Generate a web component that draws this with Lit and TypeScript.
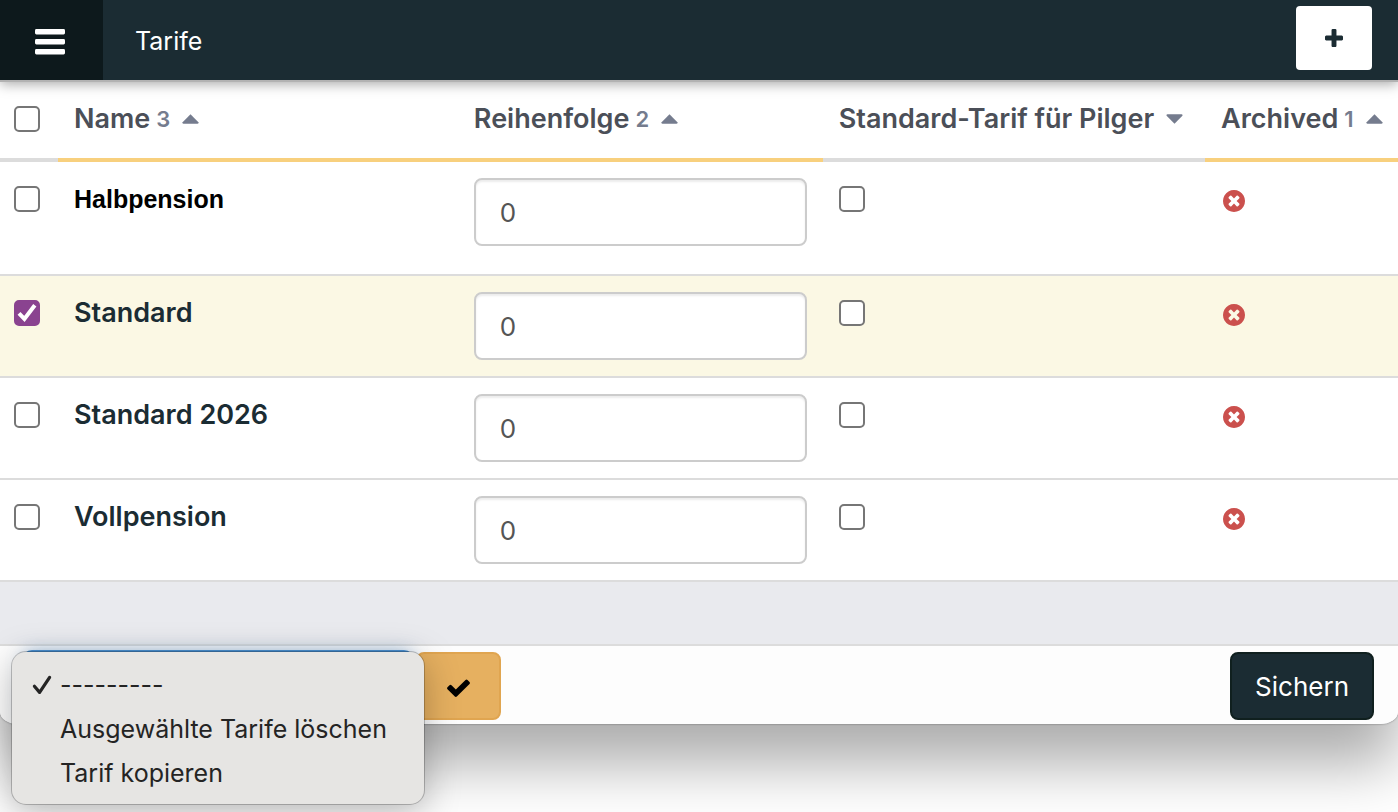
import { LitElement, html, css, svg } from "lit";
import { customElement, property, state } from "lit/decorators.js";

interface Tariff {
  name: string;
  order: number;
  selected: boolean;
  current: boolean;
}

interface Column {
  label: string;
  priority?: number;
  cls: string;
}

const PLUS = svg`<path d="M1600 736v192q0 40-28 68t-68 28h-416v416q0 40-28 68t-68 28h-192q-40 0-68-28t-28-68v-416h-416q-40 0-68-28t-28-68v-192q0-40 28-68t68-28h416v-416q0-40 28-68t68-28h192q40 0 68 28t28 68v416h416q40 0 68 28t28 68z"/>`;
const CHECK = svg`<path d="M1671 566q0 40-28 68l-724 724-136 136q-28 28-68 28t-68-28l-136-136-362-362q-28-28-28-68t28-68l136-136q28-28 68-28t68 28l294 295 656-657q28-28 68-28t68 28l136 136q28 28 28 68z"/>`;
const TIMES_CIRCLE = svg`<path d="M1277 1122q0-26-19-45l-181-181 181-181q19-19 19-45 0-27-19-46l-90-90q-19-19-46-19-26 0-45 19l-181 181-181-181q-19-19-45-19-27 0-46 19l-90 90q-19 19-19 46 0 26 19 45l181 181-181 181q-19 19-19 45 0 27 19 46l90 90q19 19 46 19 26 0 45-19l181-181 181 181q19 19 45 19 27 0 46-19l90-90q19-19 19-46zm387-226q0 209-103 385.5t-279.5 279.5-385.5 103-385.5-103-279.5-279.5-103-385.5 103-385.5 279.5-279.5 385.5-103 385.5 103 279.5 279.5 103 385.5z"/>`;

const ACTIONS = ["---------", "Ausgewählte Tarife löschen", "Tarif kopieren"];

@customElement("tick-box")
export class TickBox extends LitElement {
  @property() label = "";
  @property({ type: Boolean }) checked = false;

  static styles = css`
    :host {
      display: block;
    }
    .box {
      display: grid;
      width: 26px;
      height: 26px;
    }
    input,
    svg {
      grid-area: 1 / 1;
      width: 26px;
      height: 26px;
    }
    input {
      appearance: none;
      box-sizing: border-box;
      margin: 0;
      border: 2px solid #767676;
      border-radius: 5px;
      background: #fff;
    }
    input:checked {
      border-color: #8a4390;
      background: #8a4390;
    }
    svg {
      display: none;
      pointer-events: none;
    }
    input:checked + svg {
      display: block;
    }
  `;

  render() {
    return html`<label class="box">
      <input
        type="checkbox"
        aria-label=${this.label}
        .checked=${this.checked}
        @change=${(e: Event) => {
          this.checked = (e.target as HTMLInputElement).checked;
        }}
      />
      <svg viewBox="0 0 26 26" aria-hidden="true">
        <path d="M5 13.4l5.4 5.6L20.8 5.2" fill="none" stroke="#fff" stroke-width="4" />
      </svg>
    </label>`;
  }
}

@customElement("app-root")
export class AppRoot extends LitElement {
  @state() private action = 0;
  @state() private rows: Tariff[] = [
    { name: "Halbpension", order: 0, selected: false, current: true },
    { name: "Standard", order: 0, selected: true, current: false },
    { name: "Standard 2026", order: 0, selected: false, current: false },
    { name: "Vollpension", order: 0, selected: false, current: false },
  ];

  private columns: Column[] = [
    { label: "Name", priority: 3, cls: "c-name" },
    { label: "Reihenfolge", priority: 2, cls: "c-order" },
    { label: "Standard-Tarif für Pilger", cls: "c-default" },
    { label: "Archived", priority: 1, cls: "c-archived" },
  ];

  static styles = css`
    :host {
      display: block;
      box-sizing: border-box;
      min-height: 100vh;
      overflow: hidden;
      background: #fff;
      color: #1b2c33;
      font-family: Inter, "Liberation Sans", sans-serif;
      font-size: 26px;
      line-height: 42px;
    }
    *,
    *::before {
      box-sizing: border-box;
    }
    button,
    input,
    select {
      margin: 0;
      font: inherit;
    }
    a {
      color: inherit;
      text-decoration: none;
    }
    .window {
      border-radius: 0 0 18px 18px / 0 0 12px 12px;
      background: #e9eaee;
      box-shadow:
        0 0 2px rgba(0, 0, 0, 0.5),
        0 40px 60px rgba(0, 0, 0, 0.33);
    }
    .topbar {
      position: relative;
      display: flex;
      align-items: center;
      height: 80px;
      padding-right: 26px;
      background: #1b2c33;
      color: #fff;
      box-shadow:
        0 2px 0 #b2b2b2,
        0 4px 12px rgba(0, 0, 0, 0.35);
    }
    .burger {
      display: flex;
      align-items: center;
      align-self: stretch;
      width: 103px;
      padding: 4px 0 0 35px;
      border: 0;
      background: #0d191c;
    }
    .burger svg {
      width: 30px;
      height: 26px;
      fill: #fff;
    }
    h1 {
      flex: 1;
      margin: 0;
      padding: 2px 0 0 32px;
      font-size: 25px;
      font-weight: 400;
    }
    .add {
      display: grid;
      place-items: center;
      width: 76px;
      height: 64px;
      margin-bottom: 4px;
      border-radius: 4px;
      background: #fff;
    }
    .add svg {
      width: 18px;
      height: 18px;
      fill: #1b2c33;
    }
    table {
      width: 100%;
      border-collapse: separate;
      border-spacing: 0;
      table-layout: fixed;
      background: #fff;
    }
    .c-check {
      width: 58px;
    }
    .c-order {
      width: 26.1%;
    }
    .c-default {
      width: 27.35%;
    }
    .c-archived {
      width: 13.8%;
    }
    th,
    td {
      padding: 16px 16px;
      text-align: left;
      vertical-align: top;
    }
    thead th {
      height: 82px;
      padding-block: 0;
      border-bottom: 4px solid #dcdcdc;
      color: #4b4f58;
      font-size: 27px;
      font-weight: 600;
      white-space: nowrap;
      vertical-align: middle;
    }
    thead th.sorted {
      border-bottom-color: #f8d07e;
    }
    thead .c-check,
    tbody .pick {
      padding-inline: 14px 0;
    }
    .sort {
      display: flex;
      align-items: center;
    }
    .priority {
      margin-left: 6px;
      color: #757c8e;
      font-size: 22px;
    }
    .caret {
      flex: none;
      width: 17px;
      height: 10px;
      margin-left: 12px;
      fill: #757c8e;
    }
    tbody th,
    tbody td {
      border-bottom: 2px solid #dcdcdc;
    }
    tbody th {
      font-size: 27px;
      font-weight: 600;
    }
    .current th {
      color: #000;
      font-family: "Liberation Sans", sans-serif;
      font-size: 25px;
      font-weight: 700;
    }
    .current td {
      padding-bottom: 28px;
    }
    .selected {
      background: #fbf8e4;
    }
    tbody .pick,
    tbody .default {
      padding-top: 24px;
    }
    .order {
      display: block;
      width: 100%;
      height: 68px;
      padding: 0 24px;
      border: 2px solid #ccc;
      border-radius: 8px;
      background: #fff;
      color: #555;
      box-shadow: inset 0 2px 2px rgba(0, 0, 0, 0.075);
      appearance: textfield;
    }
    .order::-webkit-inner-spin-button {
      appearance: none;
    }
    tbody .archived {
      padding: 28px 0 0 18px;
    }
    .archived svg {
      display: block;
      width: 22px;
      height: 22px;
      fill: #cb504d;
    }
    .actions {
      position: relative;
      display: flex;
      align-items: flex-start;
      justify-content: space-between;
      margin-top: 62px;
      padding: 6px 24px 4px;
      border-top: 2px solid #dcdcdc;
      border-radius: inherit;
      background: #fdfdfd;
    }
    .batch {
      display: flex;
      gap: 4px;
    }
    .batch select {
      width: 388px;
      height: 68px;
      padding: 0 24px;
      border: 2px solid #4a8fd0;
      border-radius: 8px;
      background: #fff;
      color: #555;
      box-shadow:
        0 0 0 2px #4a8fd0,
        0 0 16px rgba(90, 150, 215, 0.6);
    }
    .go {
      display: grid;
      place-items: center;
      width: 85px;
      height: 68px;
      padding-top: 4px;
      border: 2px solid #e0a550;
      border-radius: 8px;
      background: #e6b060;
    }
    .go svg {
      width: 23px;
      height: 18px;
    }
    .save {
      height: 68px;
      padding: 2px 23px 0;
      border: 2px solid #10201f;
      border-radius: 8px;
      background: #1b2c33;
      color: #fff;
    }
    .menu {
      position: absolute;
      top: 6px;
      left: 12px;
      width: 412px;
      margin: 0;
      padding: 11px 0 9px;
      border-radius: 14px;
      background: #e6e5e3;
      color: #242424;
      font-size: 25px;
      list-style: none;
      box-shadow:
        0 0 0 1px rgba(0, 0, 0, 0.22),
        0 8px 36px rgba(0, 0, 0, 0.28);
    }
    .menu button {
      display: flex;
      align-items: center;
      width: 100%;
      height: 44px;
      padding: 0 0 0 20px;
      border: 0;
      background: none;
      color: inherit;
      text-align: left;
      white-space: nowrap;
    }
    .mark {
      flex: none;
      width: 20px;
      height: 20px;
      margin-right: 8px;
    }
  `;

  private caret(up: boolean) {
    return html`<svg class="caret" viewBox="0 0 17 10" aria-hidden="true">
      <path d=${up ? "M8.5 0.2L16.4 8.2Q17 9.6 15.6 9.8H1.4Q0 9.6 0.6 8.2Z" : "M8.5 9.8L16.4 1.8Q17 0.4 15.6 0.2H1.4Q0 0.4 0.6 1.8Z"} />
    </svg>`;
  }

  private header(col: Column) {
    const sorted = col.priority !== undefined;
    return html`<th scope="col" class="${col.cls} ${sorted ? "sorted" : ""}">
      <a class="sort" href="#"
        ><span>${col.label}</span>${sorted ? html`<span class="priority">${col.priority}</span>` : null}${this.caret(sorted)}</a
      >
    </th>`;
  }

  private row(r: Tariff) {
    return html`<tr class="${r.selected ? "selected" : ""} ${r.current ? "current" : ""}">
      <td class="pick"><tick-box label="${r.name} auswählen" ?checked=${r.selected}></tick-box></td>
      <th scope="row"><a href="#">${r.name}</a></th>
      <td><input class="order" type="number" aria-label="Reihenfolge ${r.name}" .value=${String(r.order)} /></td>
      <td class="default"><tick-box label="Standard-Tarif für Pilger ${r.name}"></tick-box></td>
      <td class="archived">
        <svg viewBox="128 128 1536 1536" role="img" aria-label="Nein">${TIMES_CIRCLE}</svg>
      </td>
    </tr>`;
  }

  render() {
    return html`<div class="window">
      <header class="topbar">
        <button class="burger" aria-label="Menü">
          <svg viewBox="0 0 30 26" aria-hidden="true">
            <rect width="30" height="5.4" rx="1.4" />
            <rect y="10" width="30" height="5.4" rx="1.4" />
            <rect y="20" width="30" height="5.4" rx="1.4" />
          </svg>
        </button>
        <h1>Tarife</h1>
        <a class="add" href="#" aria-label="Tarif hinzufügen">
          <svg viewBox="192 128 1408 1408" aria-hidden="true">${PLUS}</svg>
        </a>
      </header>
      <table>
        <thead>
          <tr>
            <th class="c-check" scope="col"><tick-box label="Alle auswählen"></tick-box></th>
            ${this.columns.map((c) => this.header(c))}
          </tr>
        </thead>
        <tbody>
          ${this.rows.map((r) => this.row(r))}
        </tbody>
      </table>
      <footer class="actions">
        <div class="batch">
          <select aria-label="Aktion" .value=${String(this.action)}>
            ${ACTIONS.map((a, i) => html`<option value=${i}>${a}</option>`)}
          </select>
          <button class="go" aria-label="Ausführen">
            <svg viewBox="121 302 1550 1220" aria-hidden="true">${CHECK}</svg>
          </button>
        </div>
        <button class="save">Sichern</button>
        <ul class="menu">
          ${ACTIONS.map(
            (a, i) => html`<li>
              <button @click=${() => (this.action = i)}>
                <svg class="mark" viewBox="0 0 20 20" aria-hidden="true">
                  ${i === this.action
                    ? svg`<path d="M2.4 11.2L7.6 17.4L17.6 2.4" fill="none" stroke="#242424" stroke-width="3.2" stroke-linecap="round" stroke-linejoin="round"/>`
                    : null}
                </svg>
                <span>${a}</span>
              </button>
            </li>`
          )}
        </ul>
      </footer>
    </div>`;
  }
}
